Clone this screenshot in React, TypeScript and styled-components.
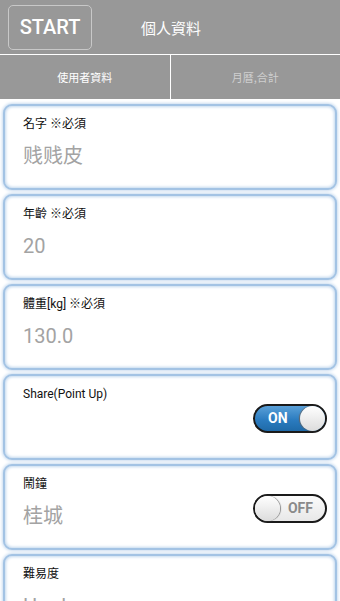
import React from "react";
import styled, { createGlobalStyle } from "styled-components";

const GlobalStyle = createGlobalStyle`
  html, body {
    margin: 0;
    padding: 0;
    background: #ffffff;
    font-family: Roboto, "Noto Sans CJK TC", sans-serif;
  }
`;

interface Field {
  label: string;
  value?: string;
  toggle?: boolean;
}

const fields: Field[] = [
  { label: "名字 ※必須", value: "贱贱皮" },
  { label: "年齡 ※必須", value: "20" },
  { label: "體重[kg] ※必須", value: "130.0" },
  { label: "Share(Point Up)", toggle: true },
  { label: "鬧鐘", value: "桂城", toggle: false },
  { label: "難易度", value: "Hard" },
];

const Toggle: React.FC<{ on: boolean }> = ({ on }) => (
  <SwitchBody on={on}>
    <SwitchText on={on}>{on ? "ON" : "OFF"}</SwitchText>
    <Knob on={on} />
  </SwitchBody>
);

const App: React.FC = () => {
  return (
    <>
      <GlobalStyle />
      <Screen>
        <Header>
          <StartButton>START</StartButton>
          <Title>個人資料</Title>
        </Header>
        <Tabs>
          <Tab active>使用者資料</Tab>
          <Tab>月曆,合計</Tab>
        </Tabs>
        <List>
          {fields.map((f) => (
            <Card key={f.label}>
              <CardText>
                <Label>{f.label}</Label>
                {f.value && <Value>{f.value}</Value>}
              </CardText>
              {f.toggle !== undefined && <Toggle on={f.toggle} />}
            </Card>
          ))}
        </List>
      </Screen>
    </>
  );
};

const Screen = styled.div`
  width: 340px;
  height: 601px;
  overflow: hidden;
  background: #ffffff;
`;

const Header = styled.div`
  height: 55px;
  background: #989898;
  display: flex;
  align-items: center;
  padding-left: 8px;
  box-sizing: border-box;
  border-bottom: 1px solid #ffffff;
`;

const StartButton = styled.div`
  width: 84px;
  height: 45px;
  box-sizing: border-box;
  border: 1px solid #c8c8c8;
  border-radius: 5px;
  display: flex;
  align-items: center;
  justify-content: center;
  color: #ffffff;
  font-family: Roboto, sans-serif;
  font-weight: 500;
  font-size: 20px;
`;

const Title = styled.div`
  margin-left: 49px;
  color: #ffffff;
  font-size: 15px;
  font-family: "Noto Sans CJK TC", sans-serif;
`;

const Tabs = styled.div`
  display: flex;
  height: 44px;
  background: #989898;
`;

const Tab = styled.div<{ active?: boolean }>`
  flex: 1;
  display: flex;
  align-items: center;
  justify-content: center;
  font-size: 11px;
  font-family: "Noto Sans CJK TC", sans-serif;
  color: ${(p) => (p.active ? "#ffffff" : "#cfcfcf")};
  & + & {
    border-left: 1px solid #ffffff;
  }
`;

const List = styled.div`
  display: flex;
  flex-direction: column;
  gap: 4px;
  padding: 5px 3px 0;
`;

const Card = styled.div`
  height: 86px;
  flex-shrink: 0;
  box-sizing: border-box;
  border: 2px solid #a3c3e4;
  border-radius: 9px;
  box-shadow: 0 0 3px 1px #c9dcf0, inset 0 0 3px 1px #c2d8ef;
  background: #ffffff;
  display: flex;
  align-items: center;
  padding: 0 8px 0 18px;
`;

const CardText = styled.div`
  flex: 1;
  align-self: flex-start;
  padding-top: 9px;
  display: flex;
  flex-direction: column;
`;

const Label = styled.div`
  font-size: 12px;
  line-height: 18px;
  color: #111111;
  font-family: Roboto, "Noto Sans CJK TC", sans-serif;
`;

const Value = styled.div`
  margin-top: 9px;
  font-size: 20px;
  line-height: 28px;
  color: #a3a3a3;
  font-family: Roboto, "Noto Sans CJK TC", sans-serif;
`;

const SwitchBody = styled.div<{ on: boolean }>`
  position: relative;
  width: 74px;
  height: 29px;
  box-sizing: border-box;
  border: 2px solid #1a1a1a;
  border-radius: 15px;
  background: ${(p) =>
    p.on
      ? "linear-gradient(#5aa0d8, #2b7cc0 55%, #1f6aa8)"
      : "linear-gradient(#fbfbfb, #e8e8e8)"};
  display: flex;
  align-items: center;
  margin-top: 2px;
`;

const SwitchText = styled.div<{ on: boolean }>`
  position: absolute;
  top: 0;
  bottom: 0;
  display: flex;
  align-items: center;
  ${(p) => (p.on ? "left: 13px;" : "right: 12px;")}
  font-family: Roboto, sans-serif;
  font-weight: 700;
  font-size: 14px;
  color: ${(p) => (p.on ? "#ffffff" : "#8a8a8a")};
`;

const Knob = styled.div<{ on: boolean }>`
  position: absolute;
  top: 0;
  ${(p) => (p.on ? "right: 0;" : "left: 0;")}
  width: 25px;
  height: 25px;
  border-radius: 50%;
  background: linear-gradient(#ffffff, #dcdcdc);
  box-shadow: ${(p) => (p.on ? "-1px 0 1px #666" : "1px 0 1px #888")};
`;

export default App;
